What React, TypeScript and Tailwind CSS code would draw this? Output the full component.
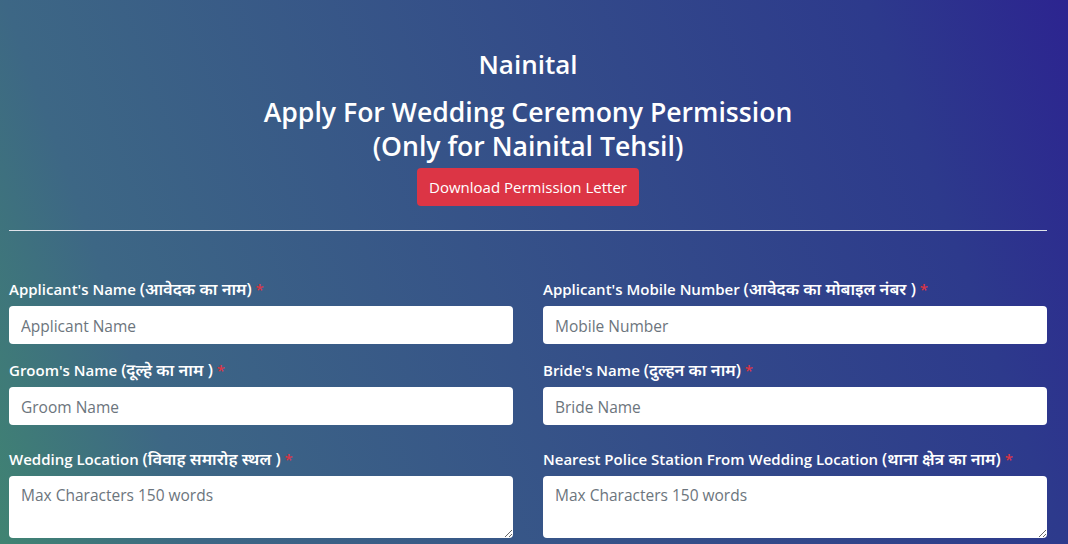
import React from "react";

const font = {
  fontFamily:
    '"Open Sans", "Noto Sans", "Noto Sans Devanagari", "Lohit Devanagari", sans-serif',
};

function Label({ text, hindi }: { text: string; hindi: string }) {
  return (
    <label className="block text-[15px] font-semibold text-white leading-[22px] mb-[6px]">
      {text} <span className="text-[16.5px] font-semibold">{hindi}</span>{" "}
      <span className="text-[#dc3545]">*</span>
    </label>
  );
}

function Field({ text, hindi, placeholder }: { text: string; hindi: string; placeholder: string }) {
  return (
    <div className="mb-[15px]">
      <Label text={text} hindi={hindi} />
      <input
        className="block w-full h-[38px] rounded-[4px] bg-white px-3 pt-[2px] text-[15.5px] text-gray-700 placeholder:text-[#6c757d] outline-none"
        placeholder={placeholder}
      />
    </div>
  );
}

function AreaField({ text, hindi }: { text: string; hindi: string }) {
  return (
    <div className="mb-[15px]">
      <Label text={text} hindi={hindi} />
      <textarea
        className="block w-full h-[62px] rounded-[4px] bg-white px-3 py-[8px] text-[15.5px] text-gray-700 placeholder:text-[#6c757d] outline-none"
        placeholder="Max Characters 150 words"
      />
    </div>
  );
}

export default function App() {
  return (
    <div
      className="min-h-screen h-[544px] overflow-hidden bg-[linear-gradient(70deg,#408472_0%,#3d6785_16%,#2d3a8c_84%,#2c2490_100%)]"
      style={font}
    >
      <div className="pl-[9px] pr-[21px] pt-[44px]">
        {/* Header */}
        <div className="text-center text-white">
          <h2 className="text-[26px] font-semibold leading-[40px]">Nainital</h2>
          <h1 className="mt-[11px] text-[26.6px] font-semibold leading-[34px]">
            Apply For Wedding Ceremony Permission
            <br />
            (Only for Nainital Tehsil)
          </h1>
          <button className="mt-[5px] h-[38px] rounded-[4px] bg-[#dc3545] px-3 text-[15px] text-white">
            Download Permission Letter
          </button>
        </div>

        <hr className="mt-[24px] border-t border-[#dfe3ea]" />

        {/* Form */}
        <div className="mt-[47px] grid grid-cols-2 gap-x-[30px]">
          <Field text="Applicant's Name" hindi="(आवेदक का नाम)" placeholder="Applicant Name" />
          <Field
            text="Applicant's Mobile Number"
            hindi="(आवेदक का मोबाइल नंबर )"
            placeholder="Mobile Number"
          />
          <Field text="Groom's Name" hindi="(दूल्हे का नाम )" placeholder="Groom Name" />
          <Field text="Bride's Name" hindi="(दुल्हन का नाम)" placeholder="Bride Name" />
          <div className="mt-[8px]">
            <AreaField text="Wedding Location" hindi="(विवाह समारोह स्थल )" />
          </div>
          <div className="mt-[8px]">
            <AreaField
              text="Nearest Police Station From Wedding Location"
              hindi="(थाना क्षेत्र का नाम)"
            />
          </div>
        </div>
      </div>
    </div>
  );
}
